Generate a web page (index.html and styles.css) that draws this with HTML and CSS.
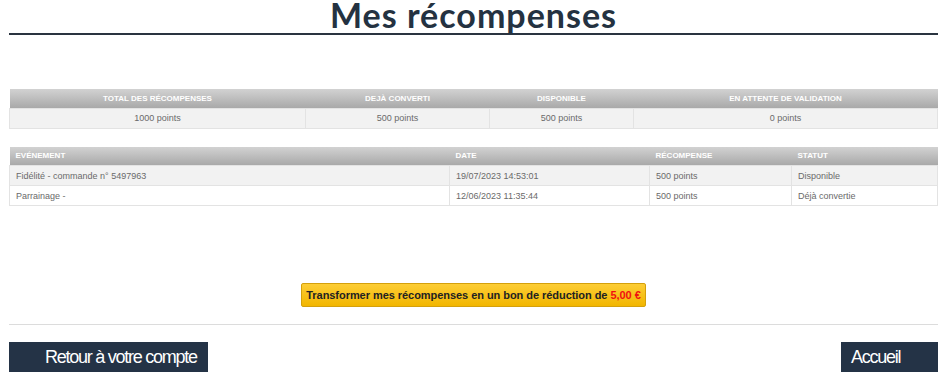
FILE: index.html
```html
<!DOCTYPE html>
<html lang="fr">
<head>
  <meta charset="UTF-8" />
  <meta name="viewport" content="width=device-width, initial-scale=1" />
  <title>Mes récompenses</title>
  <link rel="stylesheet" href="styles.css">
</head>
<body>
  <div class="page" role="main">
    <h1 class="title">Mes récompenses</h1>

    <table class="grid summary">
      <thead>
        <tr>
          <th class="c1">Total des récompenses</th>
          <th class="c2">Dejà converti</th>
          <th class="c3">Disponible</th>
          <th>En attente de validation</th>
        </tr>
      </thead>
      <tbody>
        <tr>
          <td>1000 points</td>
          <td>500 points</td>
          <td>500 points</td>
          <td>0 points</td>
        </tr>
      </tbody>
    </table>

    <table class="grid history">
      <thead>
        <tr>
          <th class="h1">Evénement</th>
          <th class="h2">Date</th>
          <th class="h3">Récompense</th>
          <th>Statut</th>
        </tr>
      </thead>
      <tbody>
        <tr class="odd">
          <td>Fidélité - commande n° 5497963</td>
          <td>19/07/2023 14:53:01</td>
          <td>500 points</td>
          <td>Disponible</td>
        </tr>
        <tr>
          <td>Parrainage -</td>
          <td>12/06/2023 11:35:44</td>
          <td>500 points</td>
          <td>Déjà convertie</td>
        </tr>
      </tbody>
    </table>

    <div class="convert">
      <button class="convert-btn">Transformer mes récompenses en un bon de réduction de <span class="amount">5,00 €</span></button>
    </div>

    <div class="actions">
      <a class="nav-btn back" href="#">Retour à votre compte</a>
      <a class="nav-btn home" href="#">Accueil</a>
    </div>
  </div>
</body>
</html>
```

FILE: styles.css
```css
* {
  box-sizing: border-box;
}
body {
  margin: 0;
  font-family: 'Liberation Sans', Arial, sans-serif;
  color: #666;
  background: #fff;
}

.page {
  padding: 0 10px 0 9px;
}

.title {
  margin: -2px 0 0;
  padding: 0;
  height: 37px;
  font-family: Lato, 'Open Sans', sans-serif;
  font-weight: 700;
  font-size: 34px;
  line-height: 34px;
  letter-spacing: 1px;
  text-align: center;
  color: #243241;
  border-bottom: 2px solid #2a3440;
}

/* Tableaux */
.grid {
  width: 100%;
  border-collapse: collapse;
  font-size: 9px;
}
.grid th {
  height: 19px;
  padding: 0 6px;
  color: #fff;
  font-weight: 700;
  font-size: 8px;
  text-transform: uppercase;
  background: linear-gradient(#d2d2d2, #a9a9a9);
}
.grid td {
  height: 20px;
  padding: 0 6px;
  border: 1px solid #e3e3e3;
  color: #6a6a6a;
}

.summary {
  margin-top: 54px;
}
.summary th,
.summary td {
  text-align: center;
}
.summary td {
  background: #f2f2f2;
}
.summary .c1 { width: 296px; }
.summary .c2 { width: 184px; }
.summary .c3 { width: 144px; }

.history {
  margin-top: 18px;
}
.history th,
.history td {
  text-align: left;
}
.history .h1 { width: 440px; }
.history .h2 { width: 200px; }
.history .h3 { width: 142px; }
.history .odd td {
  background: #f2f2f2;
}

/* Bouton de conversion */
.convert {
  margin-top: 77px;
  padding-bottom: 17px;
  border-bottom: 1px solid #dcdcdc;
  text-align: center;
}
.convert-btn {
  height: 24px;
  width: 345px;
  padding: 0;
  font-family: 'Liberation Sans', Arial, sans-serif;
  font-weight: 700;
  font-size: 11px;
  letter-spacing: -0.05px;
  color: #222;
  background: linear-gradient(#fdcd35, #f2b600);
  border: 1px solid #d4a00c;
  border-radius: 2px;
  cursor: pointer;
}
.convert-btn .amount {
  color: #f01010;
}

/* Navigation */
.actions {
  display: flex;
  justify-content: space-between;
  margin-top: 17px;
}
.nav-btn {
  display: block;
  height: 30px;
  line-height: 30px;
  font-size: 18px;
  letter-spacing: -1.25px;
  color: #fff;
  text-decoration: none;
  background: #243346;
}
.back {
  width: 199px;
  padding-left: 36px;
}
.home {
  width: 97px;
  padding-left: 10px;
}
```
